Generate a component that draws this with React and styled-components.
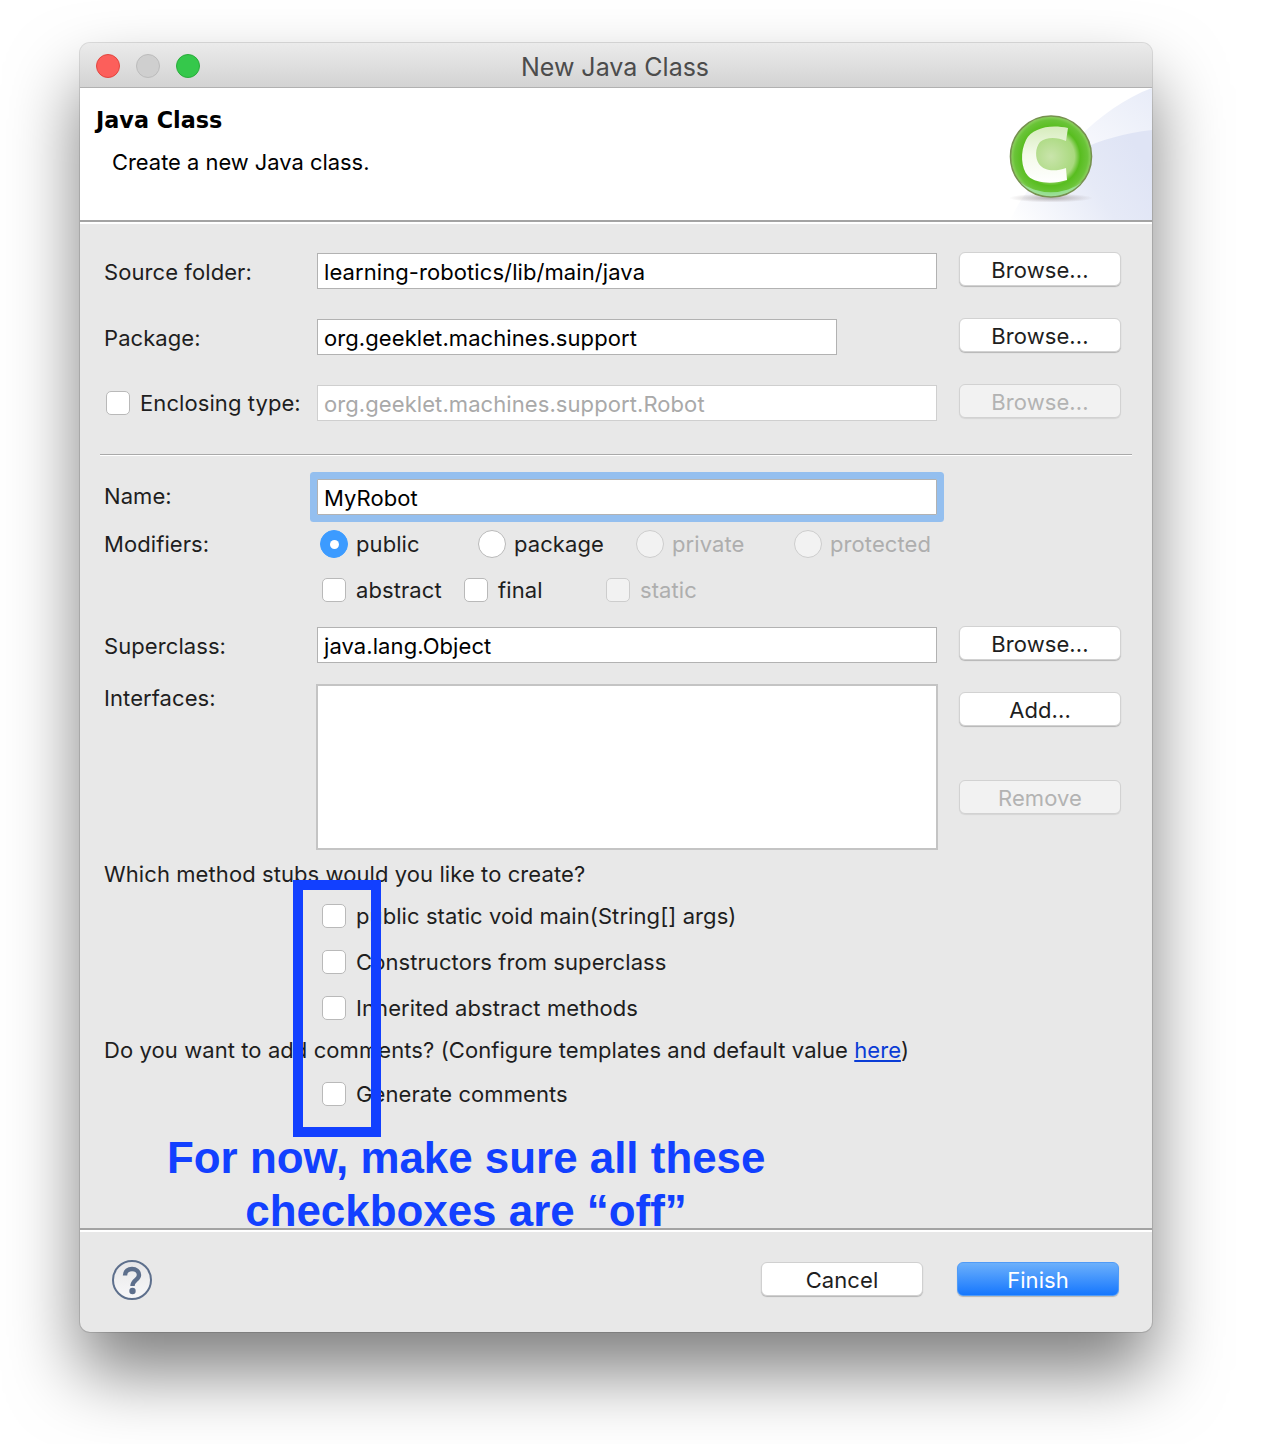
import React from "react";
import styled, { createGlobalStyle } from "styled-components";

const Global = createGlobalStyle`
  html, body { margin: 0; padding: 0; background: #fff; }
  #root { width: 1270px; height: 1444px; overflow: hidden; position: relative; }
  * { box-sizing: border-box; }
`;

const Page = styled.div`
  width: 1270px;
  height: 1444px;
  padding: 43px 0 0 80px;
  font-family: Inter, "Liberation Sans", sans-serif;
  font-size: 22px;
  letter-spacing: 0.08px;
  color: #1e1e1e;
`;

const Win = styled.div`
  position: relative;
  width: 1072px;
  height: 1289px;
  display: flex;
  flex-direction: column;
  background: #e8e8e8;
  border-radius: 10px;
  box-shadow: 0 40px 70px rgba(0, 0, 0, 0.5), 0 0 0 1px rgba(0, 0, 0, 0.12);
`;

const TitleBar = styled.div`
  height: 45px;
  flex: none;
  display: flex;
  align-items: center;
  position: relative;
  padding: 1px 0 0 16px;
  gap: 16px;
  border-radius: 10px 10px 0 0;
  background: linear-gradient(#ebebeb, #d3d3d3);
  border-bottom: 1px solid #b1b1b1;
`;

const Light = styled.span`
  width: 24px;
  height: 24px;
  border-radius: 50%;
  background: ${(p) => p.$bg};
  border: 1px solid ${(p) => p.$edge};
`;

const Title = styled.div`
  position: absolute;
  left: 0;
  right: 0;
  top: 9px;
  padding-right: 2px;
  text-align: center;
  font-size: 25px;
  line-height: 30px;
  letter-spacing: 0;
  color: #4c4c4c;
`;

const Header = styled.div`
  height: 134px;
  flex: none;
  position: relative;
  background: #fff;
  padding: 17px 0 0 16px;
  border-bottom: 2px solid #a3a3a3;
  overflow: hidden;
`;

const HeaderTitle = styled.div`
  font-family: "DejaVu Sans", sans-serif;
  font-weight: 700;
  font-size: 22.3px;
  line-height: 30px;
  letter-spacing: 0;
  color: #000;
`;

const HeaderSub = styled.div`
  margin: 13px 0 0 16px;
  line-height: 28px;
  font-size: 21.9px;
  letter-spacing: 0;
  color: #000;
`;

const Banner = styled.svg`
  position: absolute;
  right: 0;
  top: 0;
`;

const Form = styled.div`
  flex: 1;
  position: relative;
  border-top: 2px solid #fff;
  padding: 29px 0 0 24px;
  display: flex;
  flex-direction: column;
`;

const Row = styled.div`
  display: grid;
  grid-template-columns: 213px 620px 22px 162px;
  height: ${(p) => p.$h || 36}px;
  margin-top: ${(p) => p.$mt || 0}px;
  align-items: center;
`;

const Label = styled.div`
  line-height: 24px;
  align-self: ${(p) => (p.$top ? "start" : "center")};
  margin-top: ${(p) => (p.$top ? 2 : p.$dy || 0)}px;
`;

const Input = styled.div`
  height: 36px;
  width: ${(p) => p.$w || 620}px;
  background: #fff;
  border: 1px solid ${(p) => (p.$off ? "#cfcfcf" : "#b2b2b2")};
  padding: 0 6px;
  line-height: 36px;
  white-space: nowrap;
  color: ${(p) => (p.$off ? "#a9a9a9" : "#000")};
  box-shadow: ${(p) => (p.$focus ? "0 0 0 7px #94bfef" : "none")};
  border-radius: ${(p) => (p.$focus ? "1px" : "0")};
`;

const ListBox = styled.div`
  height: 166px;
  width: 622px;
  margin-left: -1px;
  background: #fff;
  border: 2px solid #c4c4c4;
`;

const ButtonStack = styled.div`
  grid-column: 4;
  align-self: start;
  display: flex;
  flex-direction: column;
  gap: 54px;
  padding-top: 8px;
`;

const Btn = styled.div`
  grid-column: 4;
  align-self: start;
  margin-top: ${(p) => (p.$flat ? 0 : -1)}px;
  width: 162px;
  height: 34px;
  border-radius: 6px;
  text-align: center;
  line-height: 35px;
  background: ${(p) => (p.$off ? "#f2f2f2" : "#fff")};
  color: ${(p) => (p.$off ? "#b3b3b3" : "#1e1e1e")};
  border: 1px solid #d2d2d2;
  box-shadow: 0 1px 1px ${(p) => (p.$off ? "rgba(0,0,0,.08)" : "rgba(0,0,0,.22)")};
`;

const Separator = styled.div`
  height: 2px;
  margin: 33px 20px 23px -4px;
  background: linear-gradient(#a9a9a9 50%, #fff 50%);
`;

const Check = styled.span`
  flex: none;
  width: 24px;
  height: 24px;
  border-radius: 5px;
  background: ${(p) => (p.$off ? "#f2f2f2" : "#fff")};
  border: 1.5px solid ${(p) => (p.$off ? "#cdcdcd" : "#b9b9b9")};
`;

const Radio = styled.span`
  flex: none;
  width: 28px;
  height: 28px;
  border-radius: 50%;
  display: flex;
  align-items: center;
  justify-content: center;
  background: ${(p) => (p.$on ? "#3c9bff" : p.$off ? "#f2f2f2" : "#fff")};
  border: 1.5px solid ${(p) => (p.$on ? "#3c9bff" : p.$off ? "#cdcdcd" : "#b9b9b9")};
  &::after {
    content: "";
    display: ${(p) => (p.$on ? "block" : "none")};
    width: 9px;
    height: 9px;
    border-radius: 50%;
    background: #fff;
  }
`;

const Options = styled.div`
  grid-column: 2 / -1;
  display: grid;
  grid-template-columns: repeat(4, ${(p) => p.$step}px);
  padding-left: ${(p) => p.$inset}px;
  height: 28px;
`;

const Option = styled.div`
  display: flex;
  align-items: center;
  gap: ${(p) => p.$gap}px;
  margin-left: ${(p) => p.$ml || 0}px;
  white-space: nowrap;
  color: ${(p) => (p.$off ? "#aeaeae" : "inherit")};
`;

const Stub = styled.div`
  display: flex;
  align-items: center;
  gap: 10px;
  height: 24px;
  margin: ${(p) => p.$mt}px 0 0 218px;
  white-space: nowrap;
`;

const Line = styled.div`
  line-height: 24px;
  height: 24px;
  margin-top: ${(p) => p.$mt}px;
  white-space: nowrap;
`;

const Link = styled.a`
  color: #0a3cd6;
  text-decoration: underline;
`;

const Footer = styled.div`
  height: 104px;
  flex: none;
  position: relative;
  display: flex;
  align-items: flex-start;
  padding: 32px 33px 0 32px;
  border-top: 2px solid #a3a3a3;
  box-shadow: inset 0 2px 0 #fff;
`;

const Help = styled.svg`
  margin-top: -2px;
`;

const FootBtn = styled.div`
  width: 162px;
  height: 34px;
  border-radius: 6px;
  text-align: center;
  line-height: 34px;
  margin-left: ${(p) => p.$ml}px;
  background: ${(p) => (p.$primary ? "linear-gradient(#6cb0fb, #1677fe)" : "#fff")};
  color: ${(p) => (p.$primary ? "#fff" : "#1e1e1e")};
  border: 1px solid ${(p) => (p.$primary ? "#4f9bf7" : "#d0d0d0")};
  box-shadow: 0 1px 1px rgba(0, 0, 0, 0.22);
`;

const Highlight = styled.div`
  position: absolute;
  left: 213px;
  top: 837px;
  width: 88px;
  height: 257px;
  border: 10px solid #1240ff;
`;

const Note = styled.div`
  position: absolute;
  left: 87px;
  top: 1088px;
  width: 598px;
  text-align: center;
  font-family: "Liberation Sans", sans-serif;
  font-weight: 700;
  font-size: 43.9px;
  letter-spacing: 0;
  line-height: 53px;
  color: #1240ff;
  white-space: nowrap;
`;

const ClassIcon = () => (
  <Banner width="192" height="132" viewBox="0 0 192 132">
    <defs>
      <linearGradient id="bn" x1="0" y1="1" x2="1" y2="0.5">
        <stop offset="0" stopColor="#ffffff" />
        <stop offset="0.6" stopColor="#e6eaf7" />
        <stop offset="1" stopColor="#dfe4f5" />
      </linearGradient>
      <linearGradient id="streak" x1="0" y1="1" x2="1" y2="0">
        <stop offset="0" stopColor="#f8f9fd" />
        <stop offset="1" stopColor="#e8ecf8" />
      </linearGradient>
      <radialGradient id="ball" cx="0.5" cy="0.5" r="0.5">
        <stop offset="0" stopColor="#c9e4ab" />
        <stop offset="0.58" stopColor="#a9d97e" />
        <stop offset="0.72" stopColor="#58bd1f" />
        <stop offset="0.9" stopColor="#6ac438" />
        <stop offset="1" stopColor="#93d266" />
      </radialGradient>
      <linearGradient id="cs" x1="0" y1="0" x2="0" y2="1">
        <stop offset="0" stopColor="#d6ecbc" />
        <stop offset="0.5" stopColor="#f4faea" />
        <stop offset="1" stopColor="#ffffff" />
      </linearGradient>
      <radialGradient id="sh" cx="0.5" cy="0.5" r="0.5">
        <stop offset="0" stopColor="#8a7f80" stopOpacity="0.6" />
        <stop offset="1" stopColor="#8a7f80" stopOpacity="0" />
      </radialGradient>
    </defs>
    <path d="M50 132 C70 90 105 55 192 30 L192 132 Z" fill="url(#bn)" />
    <path d="M118 50 C140 28 165 10 192 0 L192 42 C165 45 140 52 120 62 Z" fill="url(#streak)" />
    <ellipse cx="91" cy="110" rx="42" ry="4.5" fill="url(#sh)" />
    <circle cx="91" cy="68.5" r="40.5" fill="url(#ball)" stroke="#76914f" strokeWidth="1.6" />
    <path d="M60 94 A41 41 0 0 0 122 94 A40 28 0 0 1 60 94 Z" fill="#a6e8b4" opacity="0.7" />
    <path
      d="M108 40 C90 36 72 40 66 52 C60 64 61 80 68 88 C76 96 95 96 107 92 L106 80 C95 84 84 83 79 76 C75 70 75 60 80 54 C86 49 97 49 106 53 Z"
      fill="url(#cs)"
    />
  </Banner>
);

export default function App() {
  return (
    <Page>
      <Global />
      <Win>
        <TitleBar>
          <Light $bg="#fc5f5b" $edge="#e2463f" />
          <Light $bg="#cfcfcf" $edge="#bcbcbc" />
          <Light $bg="#35c84b" $edge="#2aac3b" />
          <Title>New Java Class</Title>
        </TitleBar>
        <Header>
          <HeaderTitle>Java Class</HeaderTitle>
          <HeaderSub>Create a new Java class.</HeaderSub>
          <ClassIcon />
        </Header>
        <Form>
          <Row>
            <Label $dy={1}>Source folder:</Label>
            <Input>learning-robotics/lib/main/java</Input>
            <Btn>Browse...</Btn>
          </Row>
          <Row $mt={30}>
            <Label $dy={1}>Package:</Label>
            <Input $w={520}>org.geeklet.machines.support</Input>
            <Btn>Browse...</Btn>
          </Row>
          <Row $mt={30}>
            <Option $gap={10} $ml={2}>
              <Check />
              <span>Enclosing type:</span>
            </Option>
            <Input $off>org.geeklet.machines.support.Robot</Input>
            <Btn $off>Browse...</Btn>
          </Row>
          <Separator />
          <Row>
            <Label $dy={-2}>Name:</Label>
            <Input $focus>MyRobot</Input>
          </Row>
          <Row $h={28} $mt={15}>
            <Label>Modifiers:</Label>
            <Options $step={158} $inset={3}>
              <Option $gap={8}><Radio $on /><span>public</span></Option>
              <Option $gap={8}><Radio /><span>package</span></Option>
              <Option $gap={8} $off><Radio $off /><span>private</span></Option>
              <Option $gap={8} $off><Radio $off /><span>protected</span></Option>
            </Options>
          </Row>
          <Row $h={28} $mt={18}>
            <Options $step={142} $inset={5}>
              <Option $gap={10}><Check /><span>abstract</span></Option>
              <Option $gap={10}><Check /><span>final</span></Option>
              <Option $gap={10} $off><Check $off /><span>static</span></Option>
            </Options>
          </Row>
          <Row $mt={23}>
            <Label $dy={1}>Superclass:</Label>
            <Input>java.lang.Object</Input>
            <Btn>Browse...</Btn>
          </Row>
          <Row $h={166} $mt={21}>
            <Label $top>Interfaces:</Label>
            <ListBox />
            <ButtonStack>
              <Btn $flat>Add...</Btn>
              <Btn $flat $off>Remove</Btn>
            </ButtonStack>
          </Row>
          <Line $mt={12}>Which method stubs would you like to create?</Line>
          <Stub $mt={18}><Check /><span>public static void main(String[] args)</span></Stub>
          <Stub $mt={22}><Check /><span>Constructors from superclass</span></Stub>
          <Stub $mt={22}><Check /><span>Inherited abstract methods</span></Stub>
          <Line $mt={18}>
            Do you want to add comments? (Configure templates and default value <Link>here</Link>)
          </Line>
          <Stub $mt={20}><Check /><span>Generate comments</span></Stub>
        </Form>
        <Footer>
          <Help width="40" height="40" viewBox="0 0 40 40">
            <defs>
              <linearGradient id="hp" x1="0" y1="0" x2="0" y2="1">
                <stop offset="0" stopColor="#e6e6e8" />
                <stop offset="1" stopColor="#f8f8f9" />
              </linearGradient>
            </defs>
            <circle cx="20" cy="20" r="19" fill="url(#hp)" stroke="#5d6f8c" strokeWidth="2" />
            <path d="M13 15.5 C13 11 16.5 9 20 9 C24 9 27 11.5 27 15 C27 20 20.5 20 20.5 26" fill="none" stroke="#5d6f8c" strokeWidth="4.4" />
            <circle cx="20.5" cy="31" r="3.2" fill="#5d6f8c" />
          </Help>
          <FootBtn $ml={609}>Cancel</FootBtn>
          <FootBtn $primary $ml={34}>Finish</FootBtn>
        </Footer>
        <Highlight />
        <Note>
          For now, make sure all these
          <br />
          checkboxes are “off”
        </Note>
      </Win>
    </Page>
  );
}
